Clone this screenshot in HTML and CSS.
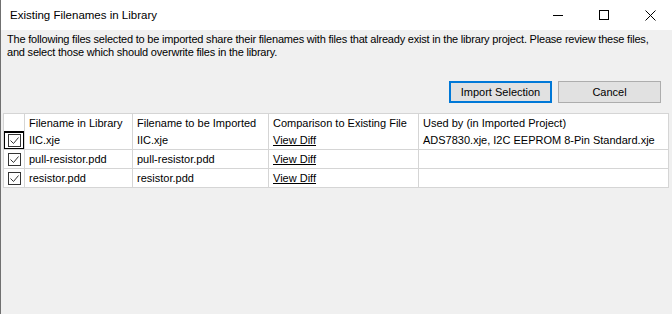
FILE: index.html
```html
<!DOCTYPE html>
<html lang="en">
<head>
  <meta charset="UTF-8" />
  <title>Existing Filenames in Library</title>
  <link rel="stylesheet" href="styles.css">
</head>
<body>
  <div class="window">
    <div class="titlebar">
      <span class="title">Existing Filenames in Library</span>
      <div class="controls">
        <span class="ctl">
          <svg width="10" height="10" viewBox="0 0 10 10"><path d="M0 5.5h10" stroke="#000" stroke-width="1" /></svg>
        </span>
        <span class="ctl">
          <svg width="10" height="10" viewBox="0 0 10 10"><rect x="0.5" y="0.5" width="9" height="9" fill="none" stroke="#000" stroke-width="1" /></svg>
        </span>
        <span class="ctl">
          <svg width="11" height="11" viewBox="0 0 11 11"><path d="M0.5 0.5l10 10M10.5 0.5l-10 10" stroke="#000" stroke-width="1" /></svg>
        </span>
      </div>
    </div>

    <div class="content">
      <p class="intro">The following files selected to be imported share their filenames with files that already exist in the library project. Please review these files,<br>and select those which should overwrite files in the library.</p>

      <div class="actions">
        <button class="btn primary">Import Selection</button>
        <button class="btn">Cancel</button>
      </div>

      <div class="grid">
        <div class="cell head"></div>
        <div class="cell head">Filename in Library</div>
        <div class="cell head">Filename to be Imported</div>
        <div class="cell head">Comparison to Existing File</div>
        <div class="cell head">Used by (in Imported Project)</div>

        <div class="cell check focus"><span class="box"><svg width="11" height="11" viewBox="0 0 11 11"><path d="M1.5 5.5l3 3 5-6" fill="none" stroke="#333" stroke-width="1" /></svg></span></div>
        <div class="cell">IIC.xje</div>
        <div class="cell">IIC.xje</div>
        <div class="cell"><a href="#">View Diff</a></div>
        <div class="cell">ADS7830.xje, I2C EEPROM 8-Pin Standard.xje</div>

        <div class="cell check"><span class="box"><svg width="11" height="11" viewBox="0 0 11 11"><path d="M1.5 5.5l3 3 5-6" fill="none" stroke="#333" stroke-width="1" /></svg></span></div>
        <div class="cell">pull-resistor.pdd</div>
        <div class="cell">pull-resistor.pdd</div>
        <div class="cell"><a href="#">View Diff</a></div>
        <div class="cell"></div>

        <div class="cell check"><span class="box"><svg width="11" height="11" viewBox="0 0 11 11"><path d="M1.5 5.5l3 3 5-6" fill="none" stroke="#333" stroke-width="1" /></svg></span></div>
        <div class="cell">resistor.pdd</div>
        <div class="cell">resistor.pdd</div>
        <div class="cell"><a href="#">View Diff</a></div>
        <div class="cell"></div>
      </div>
    </div>
  </div>
</body>
</html>
```

FILE: styles.css
```css
body {
  margin: 0;
  font-family: 'Liberation Sans', Arial, sans-serif;
  font-size: 11px;
  color: #000;
  background: #f0f0f0;
}
.window {
  height: 314px;
  border-left: 1px solid #707070;
  background: #f0f0f0;
  box-sizing: border-box;
}
.titlebar {
  height: 30px;
  background: #fff;
  display: flex;
  align-items: center;
  justify-content: space-between;
}
.title {
  padding-left: 9px;
  padding-bottom: 1px;
  font-size: 11.5px;
}
.controls {
  display: flex;
  height: 30px;
  margin-right: -1px;
}
.ctl {
  width: 46px;
  display: flex;
  align-items: center;
  justify-content: center;
}
.content {
  padding-top: 3px;
}
.intro {
  margin: 0 0 0 6px;
  line-height: 13px;
  letter-spacing: -0.2px;
  white-space: nowrap;
}
.actions {
  display: flex;
  justify-content: flex-end;
  gap: 6px;
  margin: 22px 11px 0 0;
}
.btn {
  width: 103px;
  height: 22px;
  padding: 0;
  font-family: inherit;
  font-size: 11px;
  color: #000;
  background: #e1e1e1;
  border: 1px solid #adadad;
}
.btn.primary {
  border: 2px solid #0078d7;
}
.grid {
  display: grid;
  grid-template-columns: 21px 108px 136px 150px 250px;
  grid-template-rows: 17px 19px 19px 19px;
  width: 666px;
  margin: 10px 0 0 2px;
  border-left: 1px solid #d5d5d5;
  border-top: 1px solid #d5d5d5;
  background: #fff;
  box-sizing: border-box;
}
.cell {
  border-right: 1px solid #d5d5d5;
  border-bottom: 1px solid #d5d5d5;
  padding-left: 4px;
  display: flex;
  align-items: center;
  white-space: nowrap;
  overflow: hidden;
}
.cell.head {
  border-bottom: none;
}
.cell a {
  color: #000;
}
.cell.check {
  padding: 0;
  justify-content: center;
  position: relative;
}
.cell.focus::after {
  content: "";
  position: absolute;
  inset: 0 -1px -1px -1px;
  border: 2px solid #000;
}
.box {
  width: 11px;
  height: 11px;
  border: 1px solid #333;
  background: #fff;
  display: flex;
}
```
